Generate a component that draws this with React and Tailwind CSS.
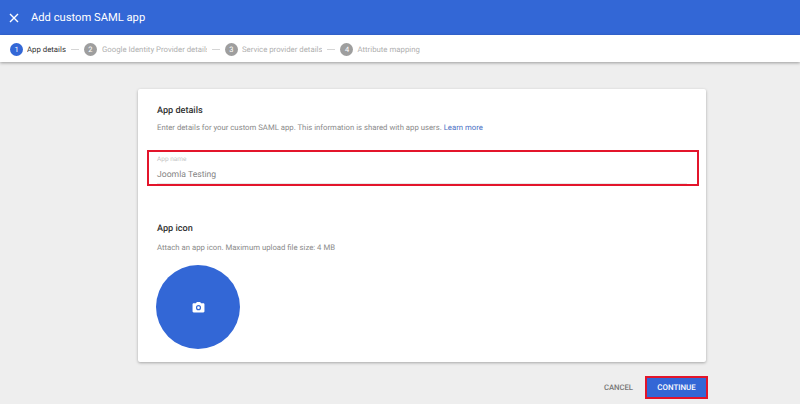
import React from 'react';

const steps = [
  { n: 1, label: 'App details', active: true },
  { n: 2, label: 'Google Identity Provider details', clip: true },
  { n: 3, label: 'Service provider details' },
  { n: 4, label: 'Attribute mapping' },
];

export default function App() {
  return (
    <div className="h-[404px] w-[800px] overflow-hidden bg-[#eeeeee] font-['Roboto',sans-serif] [text-rendering:geometricPrecision]">
      {/* Header */}
      <div className="flex h-[35px] items-center bg-[#3367d6] pl-[9px] text-white">
        <svg width="10" height="10" viewBox="0 0 10 10" className="mr-[12px] shrink-0">
          <path d="M1 1l8 8M9 1l-8 8" stroke="#fff" strokeWidth="1.4" fill="none" />
        </svg>
        <span className="text-[11.2px] leading-none">Add custom SAML app</span>
      </div>

      {/* Stepper */}
      <div className="flex h-[27px] items-center bg-white pl-[10px] pt-[2px] shadow-[0_1px_3px_rgba(0,0,0,0.35)]">
        {steps.map((s, i) => (
          <div key={s.n} className="flex items-center">
            {i > 0 && <div className="mx-[5px] h-px w-[8px] bg-[#d5d5d5]" />}
            <div
              className={`flex h-[13px] w-[13px] shrink-0 items-center justify-center rounded-full text-[7.5px] text-white ${
                s.active ? 'bg-[#3367d6]' : 'bg-[#9e9e9e]'
              }`}
            >
              {s.n}
            </div>
            <span
              className={`overflow-hidden whitespace-nowrap text-[7.8px] ${
                s.active ? 'text-[#333333]' : 'text-[#b0b0b0]'
              } ${s.clip ? 'ml-[5px] w-[105px]' : 'ml-[4px]'}`}
            >
              {s.label}
            </span>
          </div>
        ))}
      </div>

      {/* Card */}
      <div className="ml-[138px] mt-[27px] h-[273px] w-[568px] rounded-[2px] bg-white pl-[9px] pr-[7px] pt-[17px] shadow-[0_1px_3px_rgba(0,0,0,0.3)]">
        <div className="pl-[10px]">
          <div className="text-[9.1px] font-medium leading-[11px] text-[#333333]">App details</div>
          <div className="mt-[5px] text-[7.75px] leading-[11px] text-[#8a8a8a]">
            Enter details for your custom SAML app. This information is shared with app users.{' '}
            <span className="text-[#4a6fc4]">Learn more</span>
          </div>
        </div>

        {/* App name field with the red highlight */}
        <div className="mt-[17px] h-[36px] w-[552px] border-[2px] border-[#e3152b] pl-[8px] pr-[10px] pt-[3px]">
          <div className="text-[6.5px] leading-[8px] text-[#c4c4c4]">App name</div>
          <div className="mt-[5px] border-b border-[#e8e8e8] pb-[1px] text-[8.65px] leading-[14px] text-[#858585]">
            Joomla Testing
          </div>
        </div>

        <div className="pl-[10px]">
          <div className="mt-[38px] text-[9.1px] font-medium leading-[11px] text-[#333333]">App icon</div>
          <div className="mt-[7px] text-[7.75px] leading-[11px] text-[#8a8a8a]">
            Attach an app icon. Maximum upload file size: 4 MB
          </div>
          <div className="-ml-px mt-[12px] flex h-[84px] w-[84px] items-center justify-center rounded-full bg-[#3367d6]">
            <svg width="13" height="13" viewBox="0 0 24 24">
              <path
                fill="#fff"
                fillRule="evenodd"
                d="M9 2L7.2 4H3C1.9 4 1 4.9 1 6v13c0 1.1.9 2 2 2h18c1.1 0 2-.9 2-2V6c0-1.1-.9-2-2-2h-4.2L15 2H9zm3 15a4.7 4.7 0 1 0 0-9.4 4.7 4.7 0 0 0 0 9.4zm0-2.2a2.5 2.5 0 1 1 0-5 2.5 2.5 0 0 1 0 5z"
              />
            </svg>
          </div>
        </div>
      </div>

      {/* Actions */}
      <div className="ml-[138px] mt-[14px] flex w-[570px] items-center justify-end">
        <span className="mr-[12px] text-[7.7px] font-medium text-[#757575]">CANCEL</span>
        <div className="flex h-[23px] w-[63px] items-center justify-center border-[2px] border-[#e3152b] bg-[#3367d6] text-[7.9px] font-medium text-white">
          CONTINUE
        </div>
      </div>
    </div>
  );
}
